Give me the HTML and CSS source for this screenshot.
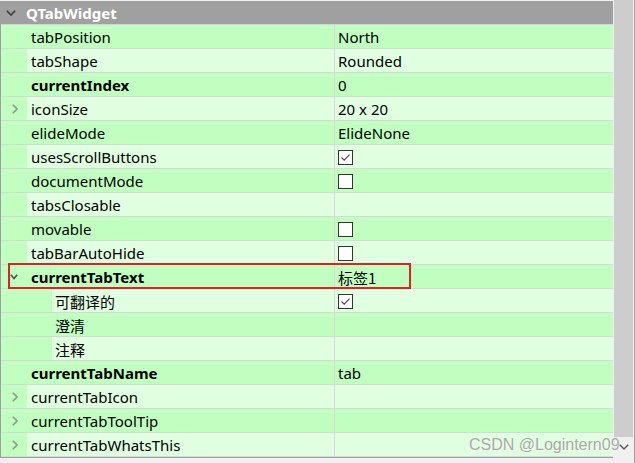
FILE: index.html
```html
<!DOCTYPE html>
<html>
<head>
<meta charset="utf-8">
<link rel="stylesheet" href="styles.css">
</head>
<body>
<div class="frame">
  <div class="tree">
    <div class="header">
      <svg class="hchev" width="10" height="6" viewBox="0 0 10 6"><polyline points="0.8,0.8 5,5 9.2,0.8" fill="none" stroke="#3a3a3a" stroke-width="1.6"/></svg>
      <span class="htext">QTabWidget</span>
    </div>

    <div class="row g"><div class="ind"></div><div class="name">tabPosition</div><div class="val">North</div></div>
    <div class="row l"><div class="ind"></div><div class="name">tabShape</div><div class="val">Rounded</div></div>
    <div class="row g"><div class="ind"></div><div class="name b">currentIndex</div><div class="val">0</div></div>
    <div class="row l"><div class="ind"><svg class="rchev" width="6" height="10" viewBox="0 0 6 10"><polyline points="0.8,0.8 5,5 0.8,9.2" fill="none" stroke="#8c9a8c" stroke-width="1.6"/></svg></div><div class="name">iconSize</div><div class="val">20 x 20</div></div>
    <div class="row g"><div class="ind"></div><div class="name">elideMode</div><div class="val">ElideNone</div></div>
    <div class="row l"><div class="ind"></div><div class="name">usesScrollButtons</div><div class="val"><span class="cb"><svg width="13" height="13" viewBox="0 0 13 13"><polyline points="2.5,6.5 5.2,9.2 10.5,3.6" fill="none" stroke="#4a4a4a" stroke-width="1.1"/></svg></span></div></div>
    <div class="row g"><div class="ind"></div><div class="name">documentMode</div><div class="val"><span class="cb"></span></div></div>
    <div class="row l"><div class="ind"></div><div class="name">tabsClosable</div><div class="val"></div></div>
    <div class="row g"><div class="ind"></div><div class="name">movable</div><div class="val"><span class="cb"></span></div></div>
    <div class="row l"><div class="ind"></div><div class="name">tabBarAutoHide</div><div class="val"><span class="cb"></span></div></div>
    <div class="row g"><div class="ind"><svg class="dchev" width="8" height="6" viewBox="0 0 8 6"><polyline points="0.8,0.8 4,4.6 7.2,0.8" fill="none" stroke="#4a524a" stroke-width="1.6"/></svg></div><div class="name b">currentTabText</div><div class="val cjk">标签1</div></div>
    <div class="row l"><div class="ind ind2"></div><div class="name n2 cjk">可翻译的</div><div class="val"><span class="cb"><svg width="13" height="13" viewBox="0 0 13 13"><polyline points="2.5,6.5 5.2,9.2 10.5,3.6" fill="none" stroke="#4a4a4a" stroke-width="1.1"/></svg></span></div></div>
    <div class="row g"><div class="ind ind2"></div><div class="name n2 cjk">澄清</div><div class="val"></div></div>
    <div class="row l"><div class="ind ind2"></div><div class="name n2 cjk">注释</div><div class="val"></div></div>
    <div class="row g"><div class="ind"></div><div class="name b">currentTabName</div><div class="val">tab</div></div>
    <div class="row l"><div class="ind"><svg class="rchev" width="6" height="10" viewBox="0 0 6 10"><polyline points="0.8,0.8 5,5 0.8,9.2" fill="none" stroke="#8c9a8c" stroke-width="1.6"/></svg></div><div class="name">currentTabIcon</div><div class="val"></div></div>
    <div class="row g"><div class="ind"><svg class="rchev" width="6" height="10" viewBox="0 0 6 10"><polyline points="0.8,0.8 5,5 0.8,9.2" fill="none" stroke="#8c9a8c" stroke-width="1.6"/></svg></div><div class="name">currentTabToolTip</div><div class="val"></div></div>
    <div class="row l"><div class="ind"><svg class="rchev" width="6" height="10" viewBox="0 0 6 10"><polyline points="0.8,0.8 5,5 0.8,9.2" fill="none" stroke="#8c9a8c" stroke-width="1.6"/></svg></div><div class="name">currentTabWhatsThis</div><div class="val"></div></div>

    <div class="highlight"></div>
  </div>
  <div class="scrollbar">
    <div class="thumb"></div>
    <div class="arrow"><svg width="10" height="6" viewBox="0 0 10 6"><polyline points="0.8,0.8 5,5 9.2,0.8" fill="none" stroke="#555" stroke-width="1.4"/></svg></div>
  </div>
  <div class="watermark">CSDN @Logintern09</div>
</div>
</body>
</html>
```

FILE: styles.css
```css
html, body {
  margin: 0;
  padding: 0;
  background: #f0f0f0;
}

.frame {
  position: relative;
  display: flex;
  width: 635px;
  height: 463px;
  overflow: hidden;
  font-family: "Noto Sans", "Noto Sans CJK SC", sans-serif;
  font-size: 15px;
  color: #000;
}

.tree {
  position: relative;
  width: 612px;
  margin-top: 1px;
  align-self: flex-start;
  border-left: 1px solid #a0a0a0;
  border-bottom: 1px solid #a0a0a0;
}

.header {
  display: flex;
  align-items: center;
  height: 23px;
  background: #a0a0a0;
  border-bottom: 1px solid #d4d4d4;
}

.hchev {
  margin-left: 5px;
  margin-right: 10px;
}

.htext {
  color: #fff;
  font-weight: bold;
}

.row {
  display: flex;
  height: 23px;
  border-bottom: 1px solid #d8d8d8;
  line-height: 23px;
}

.row.g { background: #c0ffc0; }
.row.l { background: #e0ffe0; }

.ind {
  width: 26px;
  flex: none;
  background: #c0ffc0;
  display: flex;
  align-items: center;
}

.ind2 { width: 51px; }

.rchev { margin-left: 11px; margin-top: 1px; }
.dchev { margin-left: 9px; margin-top: 1px; }

.name {
  width: 303px;
  flex: none;
  padding-left: 4px;
  padding-top: 1px;
  height: 22px;
  white-space: nowrap;
}

.name.n2 {
  width: 279px;
  padding-left: 3px;
}

.b { font-weight: bold; }

.cjk { font-family: "Noto Sans CJK SC", sans-serif; }

.val {
  flex: 1;
  border-left: 1px solid #d8d8d8;
  padding-left: 3px;
  padding-top: 1px;
  height: 22px;
  display: flex;
  align-items: center;
  white-space: nowrap;
}

.cb {
  display: block;
  width: 13px;
  height: 13px;
  border: 1px solid #333;
  background: #fff;
}

.cb svg { display: block; }

.highlight {
  position: absolute;
  left: 7px;
  top: 262px;
  width: 399px;
  height: 22px;
  border: 2px solid #e41e26;
}

.scrollbar {
  width: 19px;
  margin-left: 1px;
  display: flex;
  flex-direction: column;
  border-right: 1px solid #a0a0a0;
  padding-right: 1px;
}

.thumb {
  height: 437px;
  background: #cdcdcd;
}

.arrow {
  height: 20px;
  display: flex;
  align-items: center;
  justify-content: center;
}

.watermark {
  position: absolute;
  left: 469px;
  top: 436px;
  font-family: "Liberation Sans", sans-serif;
  font-size: 16px;
  color: #a8a8a8;
  text-shadow: 0 0 1px #fff;
}
```
